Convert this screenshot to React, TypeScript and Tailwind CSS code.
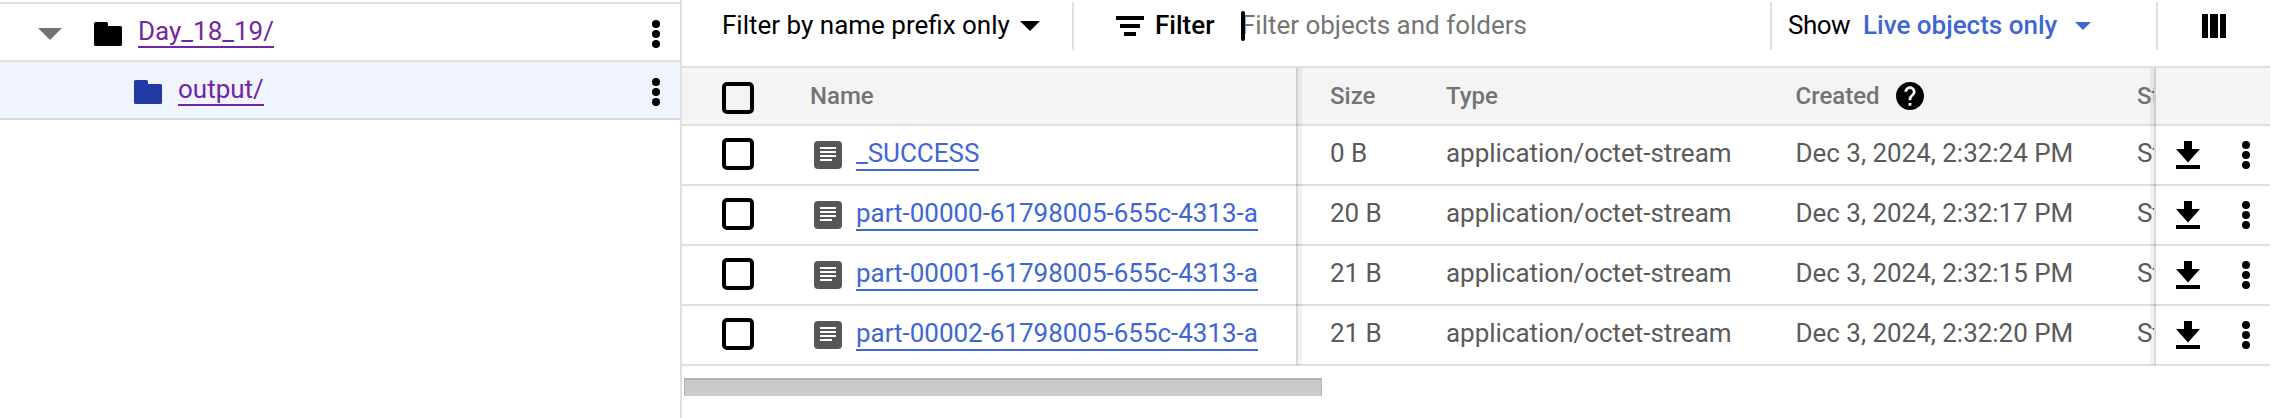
import type { ReactNode } from "react";

const objects = [
  { name: "_SUCCESS", size: "0 B", created: "Dec 3, 2024, 2:32:24 PM" },
  { name: "part-00000-61798005-655c-4313-a", size: "20 B", created: "Dec 3, 2024, 2:32:17 PM" },
  { name: "part-00001-61798005-655c-4313-a", size: "21 B", created: "Dec 3, 2024, 2:32:15 PM" },
  { name: "part-00002-61798005-655c-4313-a", size: "21 B", created: "Dec 3, 2024, 2:32:20 PM" },
];

function Dots({ className }: { className: string }) {
  return (
    <svg viewBox="0 0 8 28" className={`h-7 w-2 shrink-0 ${className}`}>
      <circle cx="4" cy="4" r="4" />
      <circle cx="4" cy="14" r="4" />
      <circle cx="4" cy="24" r="4" />
    </svg>
  );
}

function Folder({ className }: { className: string }) {
  return (
    <svg viewBox="0 0 28 24" className={`h-6 w-7 shrink-0 ${className}`} fill="currentColor">
      <path d="M1.5 0h11a1.5 1.5 0 0 1 1.5 1.5V4h12.5a1.5 1.5 0 0 1 1.5 1.5v17a1.5 1.5 0 0 1-1.5 1.5h-25A1.5 1.5 0 0 1 0 22.500v-21A1.5 1.5 0 0 1 1.500 0z" />
    </svg>
  );
}

function DocIcon() {
  return (
    <svg viewBox="0 0 28 28" className="mt-[15px] ml-[60px] size-7 shrink-0">
      <rect width="28" height="28" rx="4" fill="#565656" />
      <path d="M6 6h16v2H6zM6 10h16v2H6zM6 14h16v2H6zM6 18h12v2H6z" fill="#fff" />
    </svg>
  );
}

function Checkbox({ className }: { className: string }) {
  return <div className={`ml-10 size-8 shrink-0 rounded-[5px] border-4 border-black ${className}`} />;
}

function TableRow({ header = false, lead, cells, actions }: { header?: boolean; lead: ReactNode; cells: ReactNode[]; actions?: ReactNode }) {
  const tone = header
    ? "h-[58px] bg-[#f4f4f4] text-2xl font-medium text-[#737373]"
    : "h-[60px] text-[26px] tracking-[-0.025px] text-[#5a5a5a]";
  const pad = header ? "pt-[13px]" : "pt-3";
  return (
    <div className={`flex w-[1588px] shrink-0 border-b-2 border-[#dfdfdf] leading-[30px] whitespace-nowrap ${tone}`}>
      <div className="flex w-[616px] shrink-0 items-start">{lead}</div>
      <div className={`flex w-[856px] shrink-0 overflow-hidden pl-8 ${pad}`}>
        <div className="w-[116px] shrink-0">{cells[0]}</div>
        <div className="w-[349.5px] shrink-0">{cells[1]}</div>
        <div className="w-[341.5px] shrink-0">{cells[2]}</div>
        <div className="shrink-0">{cells[3]}</div>
      </div>
      <div className="flex w-[116px] shrink-0 items-start">{actions}</div>
    </div>
  );
}

export default function App() {
  return (
    <div className="flex h-[418px] w-[2280px] overflow-hidden bg-white font-[Roboto,sans-serif] text-[26px] leading-[30px] text-black">
      <aside className="w-[682px] shrink-0 border-r-2 border-[#e0e0e0] pt-0.5">
        <div className="flex h-[60px] items-start border-y-2 border-[#e0e0e0]">
          <svg viewBox="0 0 24 12" className="mt-6 ml-[38px] h-3 w-6 shrink-0">
            <path d="M0 0h24L12 12z" fill="#737373" />
          </svg>
          <Folder className="mt-[18px] ml-8 text-black" />
          <a className="mt-3 ml-4 border-b-2 border-[#7127a0] text-[#7127a0]">Day_18_19/</a>
          <Dots className="mt-4 mr-5 ml-auto" />
        </div>
        <div className="flex h-[58px] items-start border-b-2 border-[#d4d9e2] bg-[#f0f4fe]">
          <Folder className="mt-[18px] ml-[134px] text-[#2139a3]" />
          <a className="mt-3 ml-4 border-b-2 border-[#7127a0] text-[#7127a0]">output/</a>
          <Dots className="mt-4 mr-5 ml-auto" />
        </div>
      </aside>

      <main className="flex w-[1598px] shrink-0 flex-col">
        <div className="flex h-[66px] shrink-0 items-start whitespace-nowrap">
          <div className="mt-2.5 ml-10 w-[298px] shrink-0">Filter by name prefix only</div>
          <svg viewBox="0 0 20 10" className="mt-[21px] h-2.5 w-5 shrink-0">
            <path d="M0 0h20L10 10z" />
          </svg>
          <div className="mt-0.5 ml-8 h-12 w-0.5 shrink-0 bg-[#e0e0e0]" />
          <svg viewBox="0 0 28 20" className="mt-4 ml-[42px] h-5 w-7 shrink-0">
            <path d="M0 0h28v4H0zM4 8h20v4H4zM8 16h12v4H8z" />
          </svg>
          <div className="mt-2.5 ml-[11px] w-[86px] shrink-0 font-medium">Filter</div>
          <div className="relative mt-2.5 w-[529px] shrink-0 tracking-[-0.025px] text-[#757575]">
            Filter objects and folders
            <span className="absolute top-px left-0 h-[30px] w-1 rounded-sm bg-black" />
          </div>
          <div className="mt-0.5 h-12 w-0.5 shrink-0 bg-[#e0e0e0]" />
          <div className="mt-2.5 ml-4 w-[75px] shrink-0 tracking-[-0.5px]">Show</div>
          <div className="mt-2.5 w-[212px] shrink-0 font-medium text-[#3f67d4]">Live objects only</div>
          <svg viewBox="0 0 16 8" className="mt-[22px] h-2 w-4 shrink-0">
            <path d="M0 0h16L8 8z" fill="#3f67d4" />
          </svg>
          <div className="mt-0.5 ml-[65px] h-12 w-0.5 shrink-0 bg-[#e0e0e0]" />
          <svg viewBox="0 0 24 24" className="mt-3.5 ml-11 size-6 shrink-0">
            <path d="M0 0h6v24H0zM8 0h8v24H8zM18 0h6v24h-6z" />
          </svg>
        </div>

        <div className="relative flex w-[1588px] shrink-0 flex-col border-t-2 border-[#dfdfdf]">
          <TableRow
            header
            lead={
              <>
                <Checkbox className="mt-3.5" />
                <span className="mt-[13px] ml-14">Name</span>
              </>
            }
            cells={[
              "Size",
              "Type",
              <div className="flex items-start">
                <span className="w-[100.5px]">Created</span>
                <svg viewBox="2 2 20 20" className="mt-px size-7" fill="#000">
                  <path d="M12 2C6.480 2 2 6.480 2 12s4.480 10 10 10 10-4.480 10-10S17.520 2 12 2zm1 17h-2v-2h2v2zm2.070-7.750l-.9.920C13.450 12.900 13 13.500 13 15h-2v-.5c0-1.100.450-2.100 1.170-2.830l1.240-1.260c.370-.360.590-.860.590-1.410 0-1.100-.9-2-2-2s-2 .9-2 2H8c0-2.210 1.790-4 4-4s4 1.790 4 4c0 .880-.360 1.680-.930 2.250z" />
                </svg>
              </div>,
              "Storage class",
            ]}
          />
          {objects.map((o) => (
            <TableRow
              key={o.name}
              lead={
                <>
                  <Checkbox className="mt-3" />
                  <DocIcon />
                  <a className="mt-3 ml-3.5 border-b-2 border-[#3f67d4] pb-px text-[#3f67d4]">{o.name}</a>
                </>
              }
              cells={[o.size, "application/octet-stream", o.created, "Standard"]}
              actions={
                <>
                  <svg viewBox="0 0 24 28" className="mt-[15px] ml-[22px] h-7 w-6 shrink-0">
                    <path d="M8 0h8v8h8L12 21.500 0 8h8zM0 24h24v4H0z" />
                  </svg>
                  <Dots className="mt-[15px] ml-[42px]" />
                </>
              }
            />
          ))}
          <div className="pointer-events-none absolute top-0 bottom-px left-[614px] flex">
            <div className="w-0.5 bg-black/15" />
            <div className="w-1 bg-black/5" />
          </div>
          <div className="pointer-events-none absolute top-0 bottom-px left-[1468px] flex">
            <div className="w-1 bg-black/5" />
            <div className="w-0.5 bg-black/15" />
          </div>
        </div>

        <div className="mt-3 ml-0.5 h-[18px] w-[638px] shrink-0 border-x border-t-2 border-[#b1b1b1] bg-[#cbcbcb]" />
      </main>
    </div>
  );
}
